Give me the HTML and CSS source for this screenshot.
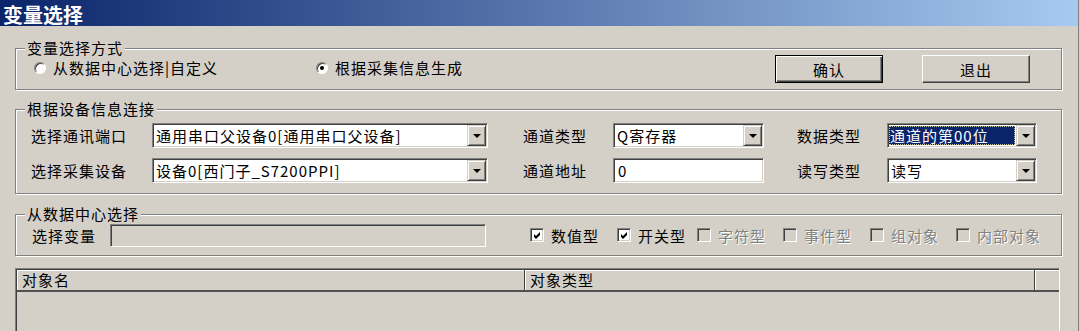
FILE: index.html
```html
<!DOCTYPE html>
<html lang="zh-CN">
<head>
    <meta charset="UTF-8">
    <title>变量选择</title>
    <link rel="stylesheet" href="styles.css">
</head>
<body>
    <div class="window">
        <div class="titlebar">变量选择</div>

        <div class="content">
            <div class="group group-mode">
                <div class="group-title">变量选择方式</div>
                <div class="mode-row">
                    <label class="option option-wide"><span class="radio"></span>从数据中心选择|自定义</label>
                    <label class="option"><span class="radio checked"></span>根据采集信息生成</label>
                    <div class="actions">
                        <button class="btn btn-default">确认</button>
                        <button class="btn">退出</button>
                    </div>
                </div>
            </div>

            <div class="group group-device">
                <div class="group-title">根据设备信息连接</div>
                <div class="device-grid">
                    <span class="field-label">选择通讯端口</span>
                    <div class="combo"><span class="combo-value">通用串口父设备0[通用串口父设备]</span><span class="combo-btn"></span></div>
                    <span class="field-label mid">通道类型</span>
                    <div class="combo"><span class="combo-value">Q寄存器</span><span class="combo-btn"></span></div>
                    <span class="field-label right">数据类型</span>
                    <div class="combo"><span class="combo-value selected">通道的第00位</span><span class="combo-btn"></span></div>

                    <span class="field-label">选择采集设备</span>
                    <div class="combo"><span class="combo-value">设备0[西门子_S7200PPI]</span><span class="combo-btn"></span></div>
                    <span class="field-label mid">通道地址</span>
                    <div class="edit">0</div>
                    <span class="field-label right">读写类型</span>
                    <div class="combo"><span class="combo-value">读写</span><span class="combo-btn"></span></div>
                </div>
            </div>

            <div class="group group-data">
                <div class="group-title">从数据中心选择</div>
                <div class="data-row">
                    <span class="var-label">选择变量</span>
                    <div class="edit edit-disabled"></div>
                    <div class="checks">
                        <label class="check"><span class="box"><svg viewBox="0 0 7 7" width="7" height="7"><path d="M0 2 L2 4 L6 0 L6 3 L2 7 L0 5 Z"/></svg></span>数值型</label>
                        <label class="check"><span class="box"><svg viewBox="0 0 7 7" width="7" height="7"><path d="M0 2 L2 4 L6 0 L6 3 L2 7 L0 5 Z"/></svg></span>开关型</label>
                        <label class="check disabled"><span class="box"></span>字符型</label>
                        <label class="check disabled"><span class="box"></span>事件型</label>
                        <label class="check disabled"><span class="box"></span>组对象</label>
                        <label class="check disabled"><span class="box"></span>内部对象</label>
                    </div>
                </div>
            </div>

            <div class="list">
                <div class="list-head">
                    <div class="head-cell">对象名</div>
                    <div class="head-cell">对象类型</div>
                    <div class="head-cell"></div>
                </div>
            </div>
        </div>
    </div>
</body>
</html>
```

FILE: styles.css
```css
* {
    box-sizing: border-box;
}

body {
    margin: 0;
    padding: 0;
    background-color: #d4d0c8;
    font-family: "Noto Sans CJK SC", "Liberation Sans", sans-serif;
    font-size: 15px;
    letter-spacing: 1px;
    color: #000;
    overflow: hidden;
}

.window {
    width: 1079px;
    height: 331px;
    overflow: hidden;
    border-right: 1px solid #808080;
}

.titlebar {
    height: 26px;
    padding: 3px 0 0 3px;
    background: linear-gradient(to right, #0a246a, #a6caf0);
    color: #fff;
    font-size: 20px;
    font-weight: bold;
    line-height: 23px;
    letter-spacing: 0;
}

.content {
    padding: 22px 16px 0 15px;
}

/* etched group box */
.group {
    border: 1px solid #808080;
    box-shadow: inset 1px 1px #fff, 1px 1px #fff;
}

.group-title {
    width: fit-content;
    height: 18px;
    margin: -10px 0 -8px 9px;
    padding: 0 2px;
    background-color: #d4d0c8;
    line-height: 18px;
}

.group-device {
    margin-top: 19px;
}

.group-data {
    margin-top: 20px;
}

.mode-row {
    display: flex;
    align-items: center;
    height: 40px;
    padding: 0 31px 0 18px;
}

.option {
    display: flex;
    align-items: center;
    gap: 7px;
    margin-bottom: 3px;
}

.option-wide {
    width: 282px;
}

.radio {
    position: relative;
    width: 12px;
    height: 12px;
    border-radius: 50%;
    background-color: #fff;
    border: 1px solid;
    border-color: #808080 #fff #fff #808080;
    box-shadow: inset 1px 1px #404040;
}

.radio.checked::after {
    content: "";
    position: absolute;
    left: 3px;
    top: 3px;
    width: 4px;
    height: 4px;
    border-radius: 50%;
    background-color: #000;
}

.actions {
    display: flex;
    gap: 39px;
    margin-left: auto;
}

.btn {
    width: 108px;
    height: 28px;
    padding: 0;
    background-color: #d4d0c8;
    border: 1px solid;
    border-color: #fff #404040 #404040 #fff;
    box-shadow: inset -1px -1px #808080;
    font: inherit;
    letter-spacing: 1px;
    color: #000;
}

.btn-default {
    border-color: #000;
    box-shadow: inset 1px 1px #fff, inset -1px -1px #404040, inset -2px -2px #808080;
}

.device-grid {
    display: grid;
    grid-template-columns: 121px 336px 125px 151px 123px 150px;
    grid-auto-rows: 25px;
    row-gap: 10px;
    align-items: center;
    padding: 13px 0 10px 15px;
}

.field-label.mid {
    padding-left: 35px;
}

.field-label.right {
    padding-left: 33px;
}

/* sunken controls */
.combo,
.edit {
    height: 25px;
    background-color: #fff;
    border: 1px solid;
    border-color: #808080 #fff #fff #808080;
    box-shadow: inset 1px 1px #404040, inset -1px -1px #d4d0c8;
}

.combo {
    display: flex;
    padding: 1px;
}

.combo-value {
    flex: 1;
    padding-left: 2px;
    line-height: 21px;
    white-space: nowrap;
    overflow: hidden;
}

.combo-value.selected {
    margin: 1px 1px 1px 0;
    padding-left: 1px;
    line-height: 19px;
    background-color: #0a246a;
    color: #fff;
    outline: 1px dotted #c8c8a0;
    outline-offset: -1px;
}

.combo-btn {
    display: flex;
    align-items: center;
    justify-content: center;
    width: 19px;
    background-color: #d4d0c8;
    border: 1px solid;
    border-color: #d4d0c8 #404040 #404040 #d4d0c8;
    box-shadow: inset 1px 1px #fff, inset -1px -1px #808080;
}

.combo-btn::before {
    content: "";
    margin-top: 1px;
    border-left: 4px solid transparent;
    border-right: 4px solid transparent;
    border-top: 4px solid #000;
}

.edit {
    padding-left: 4px;
    line-height: 23px;
}

.data-row {
    display: flex;
    align-items: center;
    height: 40px;
    padding-left: 16px;
}

.var-label {
    width: 78px;
}

.edit-disabled {
    width: 376px;
    height: 23px;
    background-color: #d4d0c8;
}

.checks {
    display: grid;
    grid-template-columns: 87px 80px 86px 87px 86px auto;
    margin-left: 44px;
}

.check {
    display: flex;
    align-items: center;
    gap: 7px;
}

.box {
    display: flex;
    align-items: center;
    justify-content: center;
    width: 14px;
    height: 14px;
    background-color: #fff;
    border: 1px solid;
    border-color: #808080 #fff #fff #808080;
    box-shadow: inset 1px 1px #404040, inset -1px -1px #d4d0c8;
}

.check.disabled {
    color: #808080;
    text-shadow: 1px 1px #fff;
}

.check.disabled .box {
    background-color: #d4d0c8;
}

.list {
    height: 80px;
    margin: 12px 2px 0 0;
    border: 1px solid;
    border-color: #808080 #fff #fff #808080;
    box-shadow: inset 1px 1px #404040;
    padding: 1px 0 0 1px;
}

.list-head {
    display: grid;
    grid-template-columns: 508px 510px 1fr;
    height: 22px;
}

.head-cell {
    padding-left: 5px;
    line-height: 20px;
    border-right: 1px solid #404040;
    border-bottom: 2px solid #505050;
    box-shadow: inset 1px 1px #fff;
}

.head-cell:last-child {
    border-right: none;
}
```
